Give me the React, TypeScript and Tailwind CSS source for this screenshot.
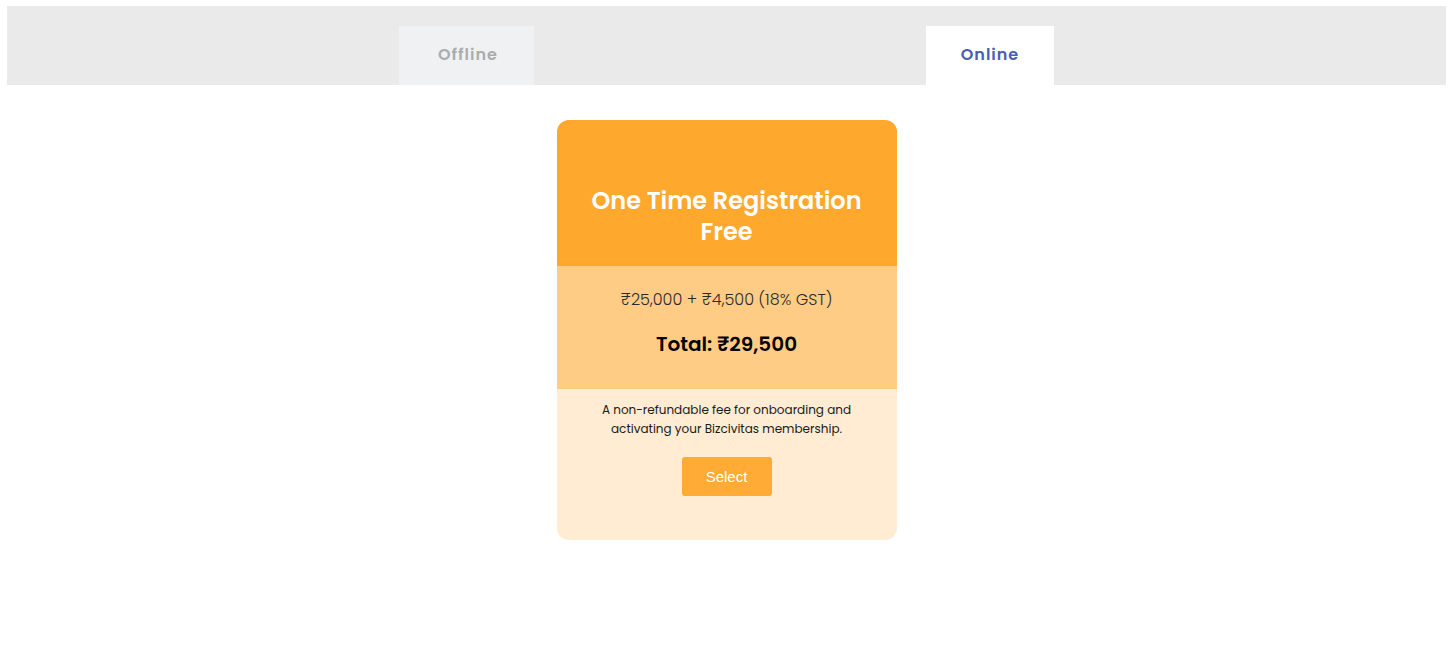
import React, { useState } from "react";

const FONT = "font-['Poppins','Noto_Sans',sans-serif]";

export default function App() {
  const [tab, setTab] = useState<"offline" | "online">("online");

  return (
    <div className={`min-h-screen bg-white pt-[6px] pl-[7px] pr-[3px] ${FONT}`}>
      <div className="flex h-[79px] items-end justify-center gap-[392px] bg-[#eaeaea]">
        <button
          onClick={() => setTab("offline")}
          className={`flex h-[59px] w-[135px] items-center justify-center pb-[2px] pl-[3px] text-[16px] font-semibold tracking-[1px] ${
            tab === "offline" ? "bg-white text-[#4a5eb1]" : "bg-[#f0f1f3] text-[#acacac]"
          }`}
        >
          Offline
        </button>
        <button
          onClick={() => setTab("online")}
          className={`flex h-[59px] w-[128px] items-center justify-center pb-[2px] text-[16px] font-semibold tracking-[1px] ${
            tab === "online" ? "bg-white text-[#4a5eb1]" : "bg-[#f0f1f3] text-[#acacac]"
          }`}
        >
          Online
        </button>
      </div>

      <div className="flex justify-center pt-[35px]">
        <div className="w-[340px] overflow-hidden rounded-[12px]">
          <div className="flex h-[146px] items-center justify-center bg-[#ffa82e] px-6 pt-[46px]">
            <h2 className="text-center text-[24px] font-semibold leading-[31px] text-white">
              One Time Registration Free
            </h2>
          </div>
          <div className="flex h-[123px] flex-col items-center bg-[#ffcc86] pt-[23px]">
            <p className="text-[16px] font-light leading-[22px] text-[#2a2a2a]">
              ₹25,000 + ₹4,500 (18% GST)
            </p>
            <p className="mt-[20px] text-[20px] font-semibold leading-[26px] text-black">
              Total: ₹29,500
            </p>
          </div>
          <div className="flex h-[151px] flex-col items-center bg-[#ffecd2] pt-[11px]">
            <p className="px-[40px] text-center text-[12px] leading-[19px] text-[#1a1a1a]">
              A non-refundable fee for onboarding and activating your Bizcivitas membership.
            </p>
            <button className="mt-[19px] h-[39px] w-[90px] rounded-[3px] bg-[#ffab35] pt-[2px] font-['Liberation_Sans',Arial,sans-serif] text-[15px] text-white">
              Select
            </button>
          </div>
        </div>
      </div>
    </div>
  );
}
